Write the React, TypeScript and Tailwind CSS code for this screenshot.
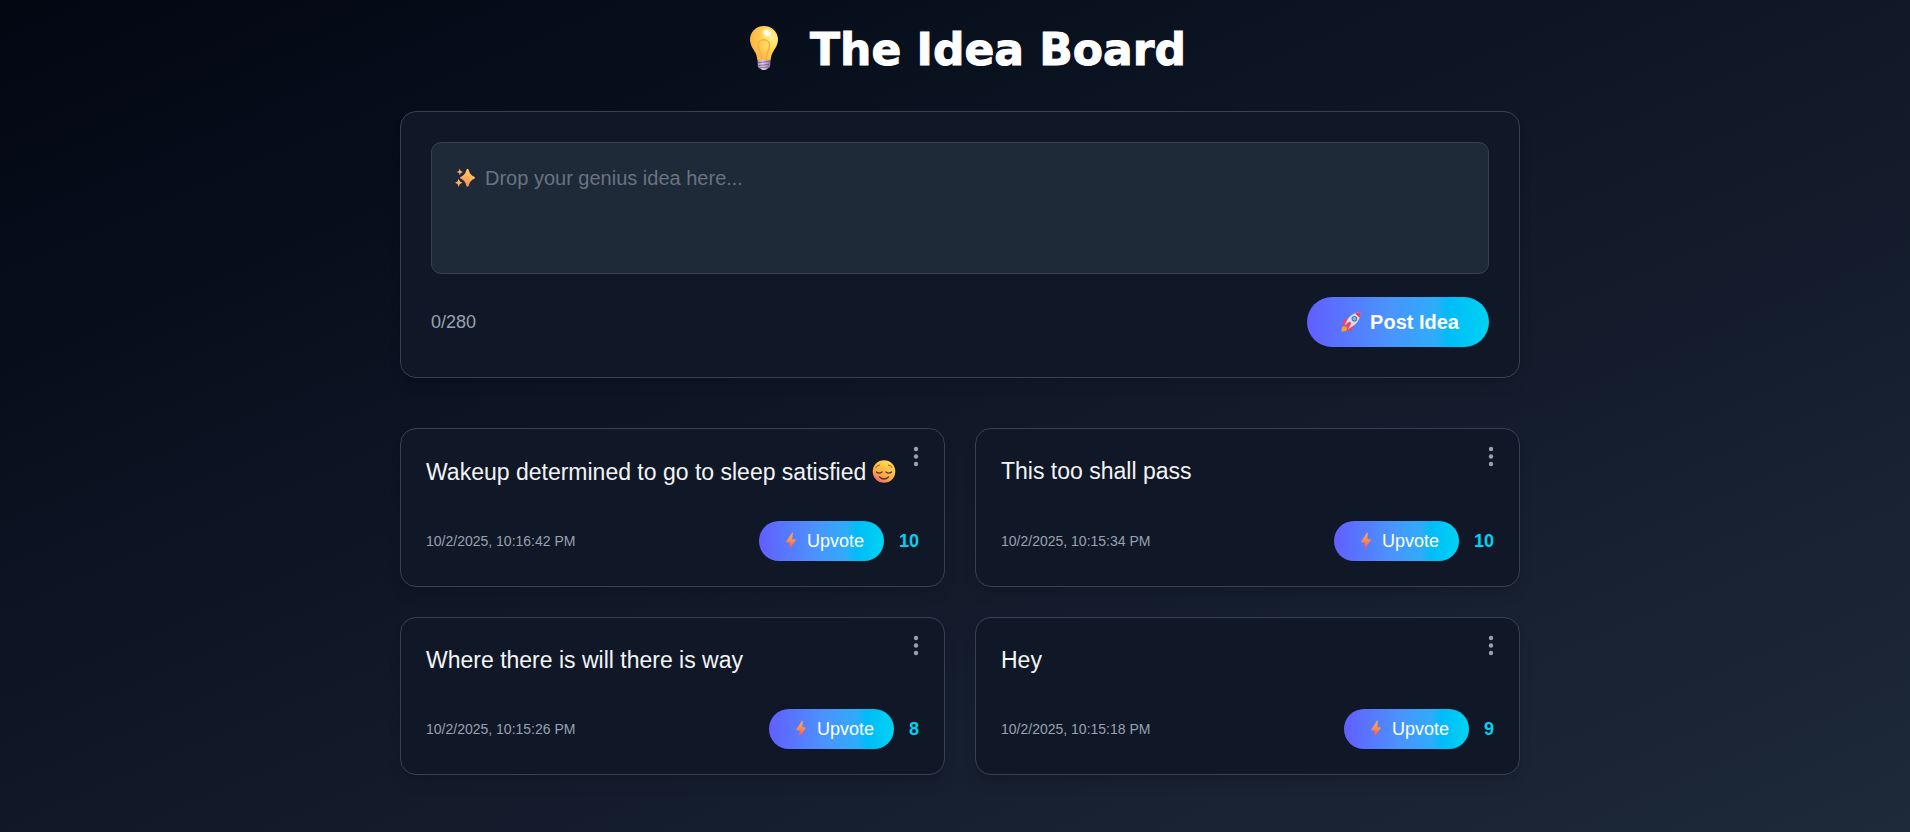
import React, { useState } from "react";

const ideas = [
  { text: "Wakeup determined to go to sleep satisfied", relieved: true, date: "10/2/2025, 10:16:42 PM", votes: 10 },
  { text: "This too shall pass", relieved: false, date: "10/2/2025, 10:15:34 PM", votes: 10 },
  { text: "Where there is will there is way", relieved: false, date: "10/2/2025, 10:15:26 PM", votes: 8 },
  { text: "Hey", relieved: false, date: "10/2/2025, 10:15:18 PM", votes: 9 },
];

const accent =
  "bg-[linear-gradient(90deg,#615fff_0%,#4b93ff_45%,#2eacfa_70%,#00bcf9_78%,#00d3f2_100%)]";

function Bulb() {
  return (
    <svg className="h-11 w-7" viewBox="0 0 28 44" aria-hidden="true">
      <defs>
        <radialGradient id="glass" cx="0.8" cy="0.35" r="0.85">
          <stop offset="0" stopColor="#fff28f" />
          <stop offset="0.35" stopColor="#ffd95a" />
          <stop offset="1" stopColor="#fdae3c" />
        </radialGradient>
        <radialGradient id="shine">
          <stop offset="0" stopColor="#fff" />
          <stop offset="0.5" stopColor="#fff" stopOpacity="0.85" />
          <stop offset="1" stopColor="#fff" stopOpacity="0" />
        </radialGradient>
        <linearGradient id="screw" x1="0" x2="1">
          <stop offset="0" stopColor="#a58bb0" />
          <stop offset="0.4" stopColor="#e2d3e6" />
          <stop offset="1" stopColor="#8e6fa8" />
        </linearGradient>
      </defs>
      <path d="M14 0C6 0 0 6 0 13.500C0 19 3 22.500 5 26C6.500 28.500 6.800 30.500 7.200 33C7.400 34.400 8 35 9.500 35H18.500C20 35 20.600 34.400 20.800 33C21.200 30.500 21.500 28.500 23 26C25 22.500 28 19 28 13.500C28 6 22 0 14 0Z" fill="url(#glass)" />
      <path d="M11.700 34C11.500 27 8.200 24 8.200 19.200C8.200 16 10.600 13.800 13.800 13.800S19.600 16 19.600 19.200C19.600 24 16.300 27 16.100 34" fill="none" stroke="#fba94a" strokeWidth="1.500" />
      <ellipse cx="17" cy="7" rx="5.500" ry="4.500" fill="url(#shine)" transform="rotate(35 17 7)" />
      <path d="M7.500 34H20.500L20 41Q18 42 16.500 43.500Q14 44.500 11.500 43.500L8 41Z" fill="url(#screw)" />
      <path d="M7.500 36.800L20.500 35.200M7.500 39.700L20.500 38.200M8.500 42L19.500 40.700" stroke="#7d6290" strokeWidth="0.900" />
    </svg>
  );
}

function Sparkles() {
  return (
    <svg className="h-5 w-5" viewBox="0 0 20 20" aria-hidden="true">
      <defs>
        <linearGradient id="spark" x1="0.700" y1="0" x2="0.300" y2="1">
          <stop offset="0" stopColor="#ffd34f" />
          <stop offset="0.500" stopColor="#ffb25c" />
          <stop offset="1" stopColor="#fa7d6a" />
        </linearGradient>
      </defs>
      <g fill="url(#spark)">
        <path d="M12.500 0.800Q13.500 0.800 13.900 2.500Q15 7 19.200 8.700Q20.800 9.700 19.200 10.700Q15 12.200 13.900 17.200Q12.500 20.200 11.200 17.200Q10 12.200 5.900 10.700Q4.300 9.700 5.900 8.700Q10 7 11.200 2.500Q11.600 0.800 12.500 0.800Z" />
        <path d="M4.800 0.800L5.700 3L8 4L5.700 5L4.800 7.200L3.900 5L1.700 4L3.900 3Z" />
        <path d="M3.700 10.800L4.900 13.600L7.500 14.700L4.900 15.900L3.700 19L2.500 15.900L0 14.700L2.500 13.600Z" />
      </g>
    </svg>
  );
}

function Rocket() {
  return (
    <svg className="h-5 w-5" viewBox="0 0 20 20" aria-hidden="true">
      <path d="M1 15L4 13.500L6.500 16.500L5 19L0.500 19.700Z" fill="#ff9d1c" />
      <path d="M7.500 6L3.500 7.500L0.500 13L5.500 11.500ZM14.200 12L12 17L7.500 19.600L8.700 14.800Z" fill="#f0406f" />
      <path d="M3.300 13.500L5.500 9.500C8.500 3.500 13 0.800 19.500 0.300C19.200 7 16.500 11.500 11 14.800L6.800 17.200Z" fill="#dcdbe6" />
      <path d="M14.200 1.500Q17 0.200 19.800 0.200Q19.700 3 18.500 5.800Z" fill="#ec3b63" />
      <circle cx="13.400" cy="6.700" r="2.800" fill="#4c79a8" />
      <circle cx="13.400" cy="6.700" r="1.700" fill="#7cb9e6" />
      <path d="M2.500 14L8.500 9.500L10.300 11.300L6.500 18L5.300 14.900Z" fill="#f2436c" />
    </svg>
  );
}

function Relieved() {
  return (
    <svg className="h-[35px] w-6 shrink-0" viewBox="0 0 24 24" aria-hidden="true">
      <defs>
        <linearGradient id="face" x1="0.750" y1="0.100" x2="0.200" y2="1">
          <stop offset="0" stopColor="#ffd94f" />
          <stop offset="0.600" stopColor="#fdab3d" />
          <stop offset="1" stopColor="#ef5f78" />
        </linearGradient>
      </defs>
      <circle cx="12" cy="12" r="11.300" fill="url(#face)" />
      <g fill="none" stroke="#4e303c" strokeWidth="1.300" strokeLinecap="round">
        <path d="M4.500 12.500Q7 14.800 10 12.500M14 12.500Q17 14.800 19.500 12.500M7.500 17.500Q12 21.500 16.500 17.500" />
        <path d="M4 8Q5 5.800 7.500 5.500M16.500 5.500Q19 5.800 20 8" strokeWidth="1" stroke="#8d5630" />
      </g>
    </svg>
  );
}

function Bolt() {
  return (
    <svg className="h-[18px] w-6" viewBox="0 0 18 18" aria-hidden="true">
      <defs>
        <linearGradient id="bolt" x1="0" y1="0" x2="0" y2="1">
          <stop offset="0" stopColor="#ffb03f" />
          <stop offset="0.500" stopColor="#ff8a50" />
          <stop offset="1" stopColor="#f4435c" />
        </linearGradient>
      </defs>
      <path d="M10.200 0.500L4.200 9.500Q4 10.300 4.800 10.400H7.700L7.400 17.300L13.800 8.300Q14 7.400 13.200 7.300H10.300L10.800 0.800Z" fill="url(#bolt)" />
    </svg>
  );
}

export default function App() {
  const [draft, setDraft] = useState("");
  const [items, setItems] = useState(ideas);

  return (
    <div className="min-h-screen bg-linear-to-br from-gray-950 via-gray-900 to-gray-800 pb-10 pl-[10px] pt-5 font-['Liberation_Sans',Arial,sans-serif] text-white">
      <main className="mx-auto w-full max-w-[1120px]">
        <h1 className="flex h-14 items-center justify-center gap-8 pl-4 font-['DejaVu_Sans',sans-serif] text-[44px] font-bold leading-none [-webkit-text-stroke:1px_white]">
          <Bulb />
          <span className="pt-1">The Idea Board</span>
        </h1>

        <form
          className="mt-[35px] rounded-2xl border border-gray-700 bg-gray-900 p-[30px] shadow-lg"
          onSubmit={(e) => e.preventDefault()}
        >
          <div className="relative">
            <textarea
              aria-label="Your idea"
              maxLength={280}
              value={draft}
              onChange={(e) => setDraft(e.target.value)}
              className="block h-[132px] w-full resize-none rounded-[10px] border border-gray-700 bg-[#1e2a38] px-6 py-5 text-xl leading-7 outline-none"
            />
            {draft === "" && (
              <div className="pointer-events-none absolute left-6 top-[22px] flex items-center gap-[10px] text-xl leading-7 text-gray-500">
                <Sparkles />
                Drop your genius idea here...
              </div>
            )}
          </div>
          <div className="mt-[23px] flex items-center justify-between">
            <span className="text-lg text-gray-400">{draft.length}/280</span>
            <button className={`flex h-[50px] items-center gap-[9px] rounded-full pl-[34px] pr-[30px] text-xl font-bold ${accent}`}>
              <Rocket />
              Post Idea
            </button>
          </div>
        </form>

        <section className="mt-[50px] grid grid-cols-2 gap-[30px]">
          {items.map((idea, i) => (
            <article
              key={idea.date}
              className="relative flex flex-col justify-between gap-8 rounded-2xl border border-gray-700 bg-gray-900 p-[25px] shadow-lg"
            >
              <button aria-label="Options" className="absolute right-5 top-4 h-6 w-4 text-gray-400">
                <svg viewBox="0 0 16 24" fill="currentColor" aria-hidden="true">
                  <circle cx="8" cy="4" r="2.200" />
                  <circle cx="8" cy="11.500" r="2.200" />
                  <circle cx="8" cy="19" r="2.200" />
                </svg>
              </button>
              <p className="flex items-center gap-[6px] pr-4 text-[23px] leading-[34px] text-gray-100">
                {idea.text}
                {idea.relieved && <Relieved />}
              </p>
              <div className="flex items-center justify-between">
                <time className="text-sm text-gray-400">{idea.date}</time>
                <div className="flex items-center gap-[15px]">
                  <button
                    className={`flex h-10 items-center gap-1 rounded-full px-5 text-lg ${accent}`}
                    onClick={() => setItems(items.map((it, j) => (j === i ? { ...it, votes: it.votes + 1 } : it)))}
                  >
                    <Bolt />
                    Upvote
                  </button>
                  <span className="text-lg font-bold text-[#00d3f2]">{idea.votes}</span>
                </div>
              </div>
            </article>
          ))}
        </section>
      </main>
    </div>
  );
}
